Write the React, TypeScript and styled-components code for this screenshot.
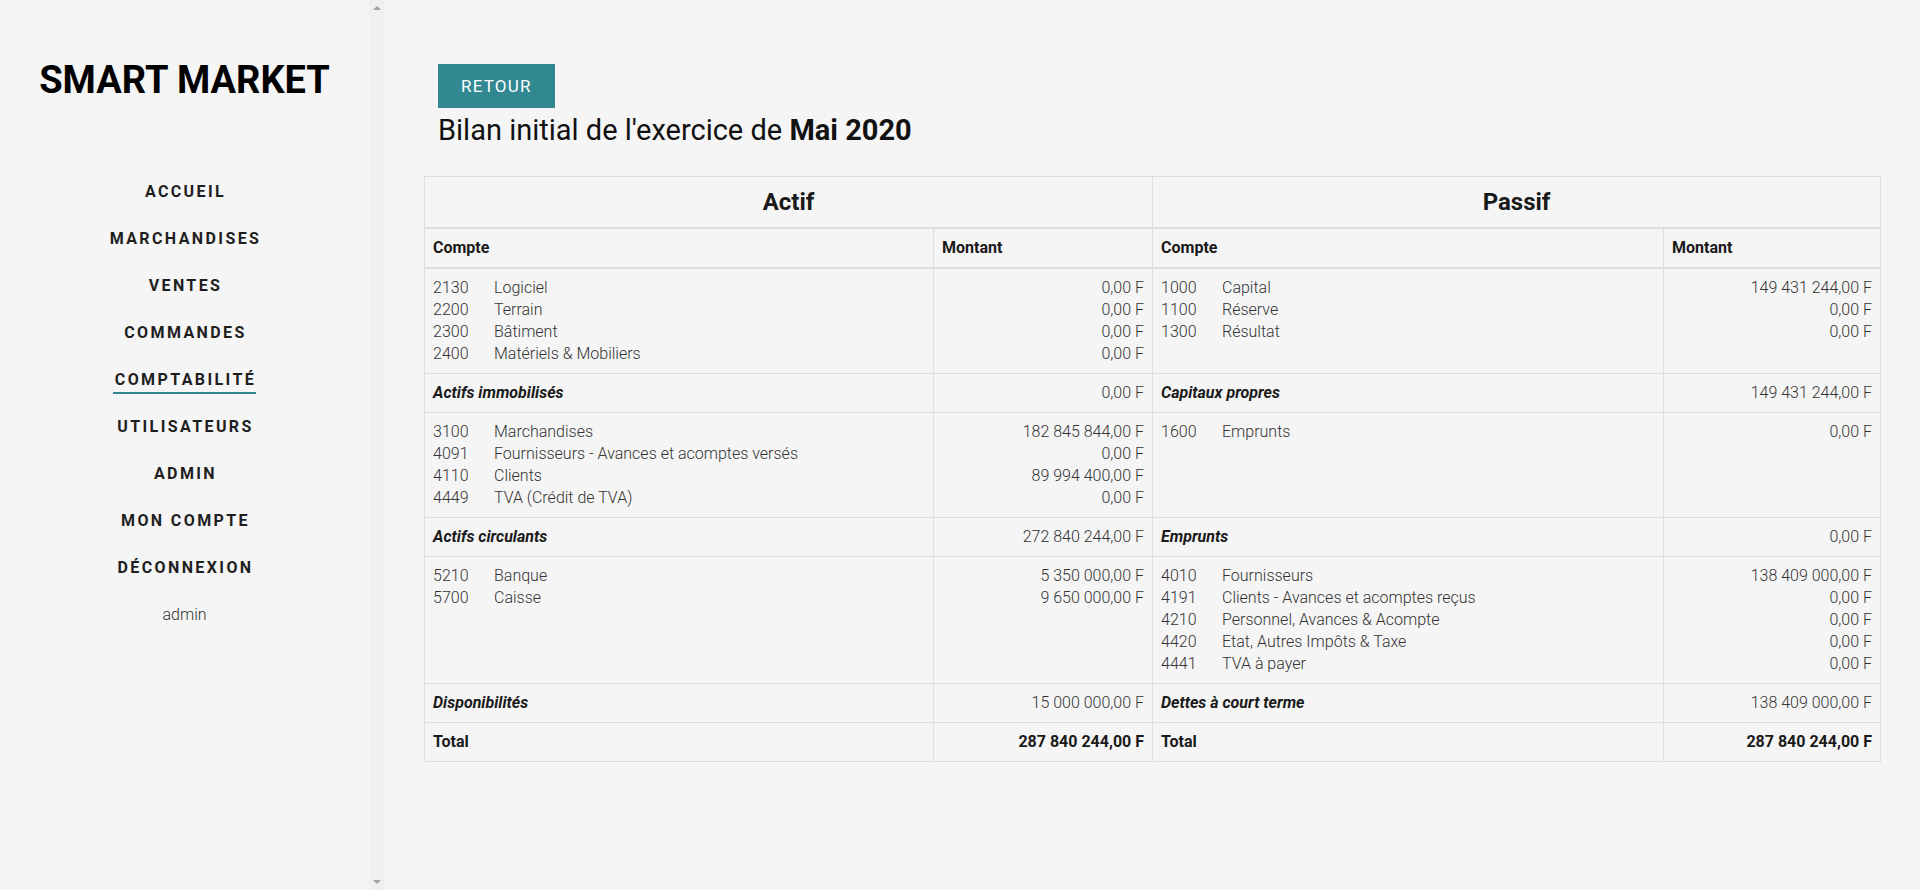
import React from "react";
import styled, { createGlobalStyle, css } from "styled-components";

const GlobalStyle = createGlobalStyle`
  html, body {
    margin: 0;
    padding: 0;
    background: #f5f5f5;
    font-family: Roboto, "Liberation Sans", sans-serif;
    color: #222;
  }
  * { box-sizing: border-box; }
`;

const Layout = styled.div`
  display: flex;
  height: 100vh;
  overflow: hidden;
`;

const Sidebar = styled.aside`
  width: 384px;
  flex-shrink: 0;
  height: 100%;
  display: flex;
  background: #f5f5f5;
`;

const SideContent = styled.div`
  flex: 1;
  min-width: 0;
  text-align: center;
  overflow: hidden;
`;

const ScrollTrack = styled.div`
  width: 15px;
  flex-shrink: 0;
  display: flex;
  flex-direction: column;
  justify-content: space-between;
  align-items: center;
  padding: 6px 0;
  background: #f0f0f0;
`;

const Brand = styled.h1`
  margin: 57px 0 0;
  font-size: 38px;
  line-height: 46px;
  font-weight: 700;
  color: #000;
`;

const Nav = styled.nav`
  display: flex;
  flex-direction: column;
  margin-top: 65px;
`;

const NavItem = styled.a`
  height: 47px;
  display: flex;
  align-items: center;
  justify-content: center;
  text-decoration: none;
  color: #1e1e1e;
  cursor: pointer;
`;

const NavLabel = styled.span<{ $active?: boolean }>`
  display: inline-block;
  padding: 4px 0 2px 2px;
  line-height: 20px;
  font-size: 16px;
  font-weight: 700;
  letter-spacing: 2.4px;
  border-bottom: 2px solid transparent;
  ${(p) =>
    p.$active &&
    css`
      border-bottom-color: #318891;
    `}
`;

const UserName = styled.div`
  height: 47px;
  line-height: 47px;
  font-size: 16px;
  font-weight: 300;
  color: #333;
`;

const Main = styled.main`
  flex: 1;
  min-width: 0;
  padding: 0 40px;
`;

const PageHeader = styled.header`
  padding: 64px 14px 0;
`;

const BackButton = styled.button`
  display: block;
  height: 44px;
  padding: 0 23px;
  border: none;
  border-radius: 0;
  background: #318891;
  color: #fff;
  font-family: Roboto, "Liberation Sans", sans-serif;
  font-size: 17px;
  font-weight: 400;
  letter-spacing: 1.2px;
  cursor: pointer;
`;

const Title = styled.h2`
  margin: 5px 0 0;
  font-size: 29px;
  line-height: 34px;
  font-weight: 400;
  color: #111;

  strong {
    font-weight: 700;
  }
`;

const Table = styled.table`
  width: 100%;
  margin-top: 29px;
  border-collapse: collapse;
  table-layout: fixed;
  border: 1px solid #dedede;
  font-size: 16px;
`;

const SideHead = styled.th`
  padding: 8px;
  line-height: 34px;
  font-size: 24px;
  font-weight: 700;
  text-align: center;
  color: #1a1a1a;
  border: 1px solid #dedede;
  border-bottom-width: 2px;
`;

const ColHead = styled.th`
  padding: 8px;
  line-height: 22px;
  font-size: 16px;
  font-weight: 700;
  text-align: left;
  color: #1a1a1a;
  border: 1px solid #dedede;
  border-bottom-width: 2px;
`;

const Cell = styled.td<{ $align?: "left" | "right"; $weight?: "light" | "bold" | "subtotal" }>`
  padding: 8px;
  line-height: 22px;
  vertical-align: top;
  border: 1px solid #dedede;
  text-align: ${(p) => p.$align ?? "left"};
  font-weight: ${(p) => (p.$weight === "bold" || p.$weight === "subtotal" ? 700 : 300)};
  font-style: ${(p) => (p.$weight === "subtotal" ? "italic" : "normal")};
  color: ${(p) => (p.$weight === "light" || !p.$weight ? "#333" : "#1a1a1a")};
`;

const AccountLine = styled.div`
  display: grid;
  grid-template-columns: 61px 1fr;
  white-space: nowrap;
`;

const AmountLine = styled.div`
  white-space: nowrap;
`;

type Line = { code: string; name: string; amount: string };
type Section = {
  left: Line[];
  right: Line[];
  leftTotal: [string, string];
  rightTotal: [string, string];
};

const sections: Section[] = [
  {
    left: [
      { code: "2130", name: "Logiciel", amount: "0,00 F" },
      { code: "2200", name: "Terrain", amount: "0,00 F" },
      { code: "2300", name: "Bâtiment", amount: "0,00 F" },
      { code: "2400", name: "Matériels & Mobiliers", amount: "0,00 F" },
    ],
    right: [
      { code: "1000", name: "Capital", amount: "149 431 244,00 F" },
      { code: "1100", name: "Réserve", amount: "0,00 F" },
      { code: "1300", name: "Résultat", amount: "0,00 F" },
    ],
    leftTotal: ["Actifs immobilisés", "0,00 F"],
    rightTotal: ["Capitaux propres", "149 431 244,00 F"],
  },
  {
    left: [
      { code: "3100", name: "Marchandises", amount: "182 845 844,00 F" },
      { code: "4091", name: "Fournisseurs - Avances et acomptes versés", amount: "0,00 F" },
      { code: "4110", name: "Clients", amount: "89 994 400,00 F" },
      { code: "4449", name: "TVA (Crédit de TVA)", amount: "0,00 F" },
    ],
    right: [{ code: "1600", name: "Emprunts", amount: "0,00 F" }],
    leftTotal: ["Actifs circulants", "272 840 244,00 F"],
    rightTotal: ["Emprunts", "0,00 F"],
  },
  {
    left: [
      { code: "5210", name: "Banque", amount: "5 350 000,00 F" },
      { code: "5700", name: "Caisse", amount: "9 650 000,00 F" },
    ],
    right: [
      { code: "4010", name: "Fournisseurs", amount: "138 409 000,00 F" },
      { code: "4191", name: "Clients - Avances et acomptes reçus", amount: "0,00 F" },
      { code: "4210", name: "Personnel, Avances & Acompte", amount: "0,00 F" },
      { code: "4420", name: "Etat, Autres Impôts & Taxe", amount: "0,00 F" },
      { code: "4441", name: "TVA à payer", amount: "0,00 F" },
    ],
    leftTotal: ["Disponibilités", "15 000 000,00 F"],
    rightTotal: ["Dettes à court terme", "138 409 000,00 F"],
  },
];

const navLinks = [
  "ACCUEIL",
  "MARCHANDISES",
  "VENTES",
  "COMMANDES",
  "COMPTABILITÉ",
  "UTILISATEURS",
  "ADMIN",
  "MON COMPTE",
  "DÉCONNEXION",
];

const Arrow = ({ down }: { down?: boolean }) => (
  <svg width="8" height="4" viewBox="0 0 8 4" aria-hidden="true">
    <polygon points={down ? "0,0 8,0 4,4" : "0,4 8,4 4,0"} fill="#a3a3a3" />
  </svg>
);

const Accounts = ({ lines }: { lines: Line[] }) => (
  <>
    {lines.map((l) => (
      <AccountLine key={l.code}>
        <span>{l.code}</span>
        <span>{l.name}</span>
      </AccountLine>
    ))}
  </>
);

const Amounts = ({ lines }: { lines: Line[] }) => (
  <>
    {lines.map((l) => (
      <AmountLine key={l.code}>{l.amount}</AmountLine>
    ))}
  </>
);

export default function App() {
  return (
    <>
      <GlobalStyle />
      <Layout>
        <Sidebar>
          <SideContent>
            <Brand>SMART MARKET</Brand>
            <Nav>
              {navLinks.map((label) => (
                <NavItem key={label}>
                  <NavLabel $active={label === "COMPTABILITÉ"}>{label}</NavLabel>
                </NavItem>
              ))}
              <UserName>admin</UserName>
            </Nav>
          </SideContent>
          <ScrollTrack>
            <Arrow />
            <Arrow down />
          </ScrollTrack>
        </Sidebar>
        <Main>
          <PageHeader>
            <BackButton>RETOUR</BackButton>
            <Title>
              Bilan initial de l'exercice de <strong>Mai 2020</strong>
            </Title>
          </PageHeader>
          <Table>
            <colgroup>
              <col style={{ width: "509px" }} />
              <col style={{ width: "219px" }} />
              <col style={{ width: "511px" }} />
              <col style={{ width: "217px" }} />
            </colgroup>
            <thead>
              <tr>
                <SideHead colSpan={2}>Actif</SideHead>
                <SideHead colSpan={2}>Passif</SideHead>
              </tr>
              <tr>
                <ColHead>Compte</ColHead>
                <ColHead>Montant</ColHead>
                <ColHead>Compte</ColHead>
                <ColHead>Montant</ColHead>
              </tr>
            </thead>
            <tbody>
              {sections.map((s, i) => (
                <React.Fragment key={i}>
                  <tr>
                    <Cell>
                      <Accounts lines={s.left} />
                    </Cell>
                    <Cell $align="right">
                      <Amounts lines={s.left} />
                    </Cell>
                    <Cell>
                      <Accounts lines={s.right} />
                    </Cell>
                    <Cell $align="right">
                      <Amounts lines={s.right} />
                    </Cell>
                  </tr>
                  <tr>
                    <Cell $weight="subtotal">{s.leftTotal[0]}</Cell>
                    <Cell $align="right">{s.leftTotal[1]}</Cell>
                    <Cell $weight="subtotal">{s.rightTotal[0]}</Cell>
                    <Cell $align="right">{s.rightTotal[1]}</Cell>
                  </tr>
                </React.Fragment>
              ))}
              <tr>
                <Cell $weight="bold">Total</Cell>
                <Cell $weight="bold" $align="right">
                  287 840 244,00 F
                </Cell>
                <Cell $weight="bold">Total</Cell>
                <Cell $weight="bold" $align="right">
                  287 840 244,00 F
                </Cell>
              </tr>
            </tbody>
          </Table>
        </Main>
      </Layout>
    </>
  );
}
